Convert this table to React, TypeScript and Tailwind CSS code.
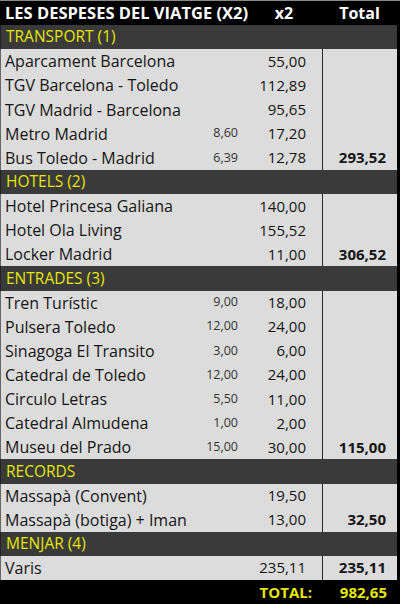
import React from "react";

type Row =
  | { kind: "section"; label: string }
  | { kind: "item"; label: string; unit?: string; x2: string; total?: string };

const rows: Row[] = [
  { kind: "section", label: "TRANSPORT (1)" },
  { kind: "item", label: "Aparcament Barcelona", x2: "55,00" },
  { kind: "item", label: "TGV Barcelona - Toledo", x2: "112,89" },
  { kind: "item", label: "TGV Madrid - Barcelona", x2: "95,65" },
  { kind: "item", label: "Metro Madrid", unit: "8,60", x2: "17,20" },
  { kind: "item", label: "Bus Toledo - Madrid", unit: "6,39", x2: "12,78", total: "293,52" },
  { kind: "section", label: "HOTELS (2)" },
  { kind: "item", label: "Hotel Princesa Galiana", x2: "140,00" },
  { kind: "item", label: "Hotel Ola Living", x2: "155,52" },
  { kind: "item", label: "Locker Madrid", x2: "11,00", total: "306,52" },
  { kind: "section", label: "ENTRADES (3)" },
  { kind: "item", label: "Tren Turístic", unit: "9,00", x2: "18,00" },
  { kind: "item", label: "Pulsera Toledo", unit: "12,00", x2: "24,00" },
  { kind: "item", label: "Sinagoga El Transito", unit: "3,00", x2: "6,00" },
  { kind: "item", label: "Catedral de Toledo", unit: "12,00", x2: "24,00" },
  { kind: "item", label: "Circulo Letras", unit: "5,50", x2: "11,00" },
  { kind: "item", label: "Catedral Almudena", unit: "1,00", x2: "2,00" },
  { kind: "item", label: "Museu del Prado", unit: "15,00", x2: "30,00", total: "115,00" },
  { kind: "section", label: "RECORDS" },
  { kind: "item", label: "Massapà (Convent)", x2: "19,50" },
  { kind: "item", label: "Massapà (botiga) + Iman", x2: "13,00", total: "32,50" },
  { kind: "section", label: "MENJAR (4)" },
  { kind: "item", label: "Varis", x2: "235,11", total: "235,11" },
];

export default function App() {
  return (
    <div
      className="w-[400px] h-[604px] flex flex-col bg-black text-[15px] leading-none"
      style={{ fontFamily: "'Open Sans', Lato, sans-serif" }}
    >
      {/* header */}
      <div className="flex-1 flex items-center bg-black text-white font-bold border-t border-[#888] text-[16.5px]">
        <div className="flex-1 min-w-0 pl-[5px] whitespace-nowrap">LES DESPESES DEL VIATGE (X2)</div>
        <div className="w-[82px] shrink-0 text-center pl-[6px] text-[16px]">x2</div>
        <div className="w-[78px] shrink-0 text-center pr-[3px] text-[16px]">Total</div>
      </div>
      {rows.map((r, i) =>
        r.kind === "section" ? (
          <div
            key={i}
            className="flex-1 flex items-center bg-[#3a3a3a] text-[#e6e600] text-[15.5px] pl-[5px] border-l border-[#222] border-r-[3px] border-r-black"
          >
            {r.label}
          </div>
        ) : (
          <div
            key={i}
            className="flex-1 flex items-stretch bg-[#dcdcdc] text-[#151515] border-l border-[#666] border-r-[3px] border-r-black"
          >
            <div className="flex-1 min-w-0 flex items-center pl-[4px] whitespace-nowrap text-[16px]">{r.label}</div>
            <div className="w-[60px] shrink-0 flex items-center justify-end pr-[2px] text-[12.5px] text-[#333]">
              {r.unit ?? ""}
            </div>
            <div className="w-[82px] shrink-0 flex items-center justify-end pr-[16px]">{r.x2}</div>
            <div className="w-[75px] shrink-0 flex items-center justify-end pr-[11px] font-bold border-l border-[#2a2a2a]">
              {r.total ?? ""}
            </div>
          </div>
        )
      )}
      {/* total */}
      <div className="flex-1 flex items-center bg-black text-[#e6e600] font-bold">
        <div className="flex-1" />
        <div className="w-[82px] text-right pr-[10px]">TOTAL:</div>
        <div className="w-[78px] text-right pr-[13px]">982,65</div>
      </div>
    </div>
  );
}
